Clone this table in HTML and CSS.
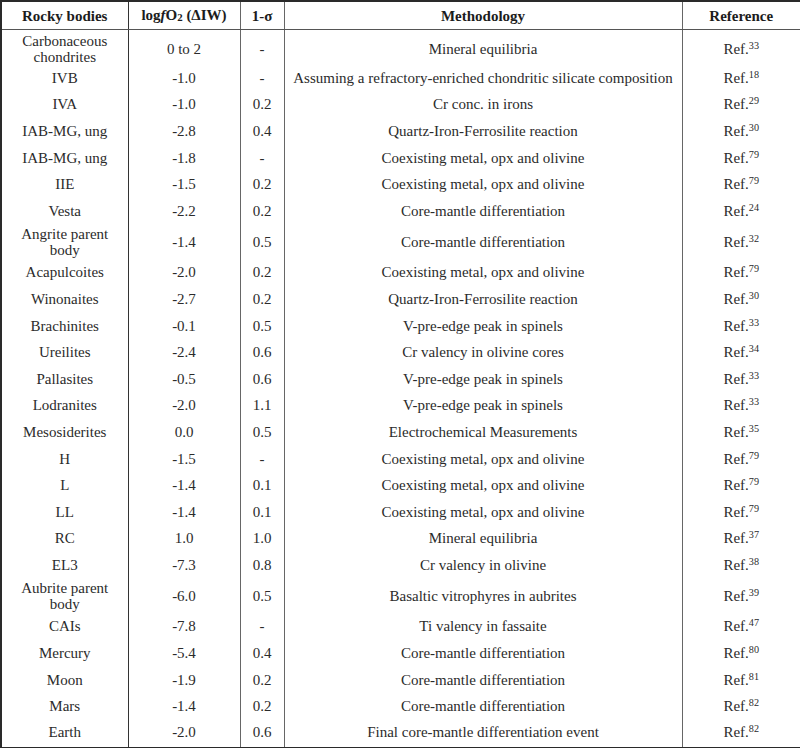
FILE: index.html
```html
<!DOCTYPE html>
<html>
<head>
<meta charset="utf-8">
<link rel="stylesheet" href="styles.css">
</head>
<body>
<table class="data">
<colgroup>
<col class="c1"><col class="c2"><col class="c3"><col class="c4"><col class="c5">
</colgroup>
<thead>
<tr class="head"><th class="first">Rocky bodies</th><th>log<i>f</i>O<sub class="low">2</sub> (ΔIW)</th><th>1-σ</th><th>Methodology</th><th>Reference</th></tr>
</thead>
<tbody>
<tr class="two top"><td class="first">Carbonaceous<br>chondrites</td><td>0 to 2</td><td>-</td><td>Mineral equilibria</td><td>Ref.<sup>33</sup></td></tr>
<tr><td class="first">IVB</td><td>-1.0</td><td>-</td><td>Assuming a refractory-enriched chondritic silicate composition</td><td>Ref.<sup>18</sup></td></tr>
<tr><td class="first">IVA</td><td>-1.0</td><td>0.2</td><td>Cr conc. in irons</td><td>Ref.<sup>29</sup></td></tr>
<tr><td class="first">IAB-MG, ung</td><td>-2.8</td><td>0.4</td><td>Quartz-Iron-Ferrosilite reaction</td><td>Ref.<sup>30</sup></td></tr>
<tr><td class="first">IAB-MG, ung</td><td>-1.8</td><td>-</td><td>Coexisting metal, opx and olivine</td><td>Ref.<sup>79</sup></td></tr>
<tr><td class="first">IIE</td><td>-1.5</td><td>0.2</td><td>Coexisting metal, opx and olivine</td><td>Ref.<sup>79</sup></td></tr>
<tr><td class="first">Vesta</td><td>-2.2</td><td>0.2</td><td>Core-mantle differentiation</td><td>Ref.<sup>24</sup></td></tr>
<tr class="two"><td class="first">Angrite parent<br>body</td><td>-1.4</td><td>0.5</td><td>Core-mantle differentiation</td><td>Ref.<sup>32</sup></td></tr>
<tr><td class="first">Acapulcoites</td><td>-2.0</td><td>0.2</td><td>Coexisting metal, opx and olivine</td><td>Ref.<sup>79</sup></td></tr>
<tr><td class="first">Winonaites</td><td>-2.7</td><td>0.2</td><td>Quartz-Iron-Ferrosilite reaction</td><td>Ref.<sup>30</sup></td></tr>
<tr><td class="first">Brachinites</td><td>-0.1</td><td>0.5</td><td>V-pre-edge peak in spinels</td><td>Ref.<sup>33</sup></td></tr>
<tr><td class="first">Ureilites</td><td>-2.4</td><td>0.6</td><td>Cr valency in olivine cores</td><td>Ref.<sup>34</sup></td></tr>
<tr><td class="first">Pallasites</td><td>-0.5</td><td>0.6</td><td>V-pre-edge peak in spinels</td><td>Ref.<sup>33</sup></td></tr>
<tr><td class="first">Lodranites</td><td>-2.0</td><td>1.1</td><td>V-pre-edge peak in spinels</td><td>Ref.<sup>33</sup></td></tr>
<tr><td class="first">Mesosiderites</td><td>0.0</td><td>0.5</td><td>Electrochemical Measurements</td><td>Ref.<sup>35</sup></td></tr>
<tr><td class="first">H</td><td>-1.5</td><td>-</td><td>Coexisting metal, opx and olivine</td><td>Ref.<sup>79</sup></td></tr>
<tr><td class="first">L</td><td>-1.4</td><td>0.1</td><td>Coexisting metal, opx and olivine</td><td>Ref.<sup>79</sup></td></tr>
<tr><td class="first">LL</td><td>-1.4</td><td>0.1</td><td>Coexisting metal, opx and olivine</td><td>Ref.<sup>79</sup></td></tr>
<tr><td class="first">RC</td><td>1.0</td><td>1.0</td><td>Mineral equilibria</td><td>Ref.<sup>37</sup></td></tr>
<tr><td class="first">EL3</td><td>-7.3</td><td>0.8</td><td>Cr valency in olivine</td><td>Ref.<sup>38</sup></td></tr>
<tr class="two"><td class="first">Aubrite parent<br>body</td><td>-6.0</td><td>0.5</td><td>Basaltic vitrophyres in aubrites</td><td>Ref.<sup>39</sup></td></tr>
<tr><td class="first">CAIs</td><td>-7.8</td><td>-</td><td>Ti valency in fassaite</td><td>Ref.<sup>47</sup></td></tr>
<tr><td class="first">Mercury</td><td>-5.4</td><td>0.4</td><td>Core-mantle differentiation</td><td>Ref.<sup>80</sup></td></tr>
<tr><td class="first">Moon</td><td>-1.9</td><td>0.2</td><td>Core-mantle differentiation</td><td>Ref.<sup>81</sup></td></tr>
<tr><td class="first">Mars</td><td>-1.4</td><td>0.2</td><td>Core-mantle differentiation</td><td>Ref.<sup>82</sup></td></tr>
<tr><td class="first">Earth</td><td>-2.0</td><td>0.6</td><td>Final core-mantle differentiation event</td><td>Ref.<sup>82</sup></td></tr>
</tbody>
</table>
</body>
</html>
```
FILE: styles.css
```css
html, body {
  margin: 0;
  padding: 0;
  background: #fff;
}
.data {
  width: 800px;
  border-collapse: collapse;
  table-layout: fixed;
  font-family: "Liberation Serif", "Times New Roman", serif;
  font-size: 15px;
  color: #2b2b2b;
  border: 2px solid #2a2a2a;
}
.c1 { width: 127px; }
.c2 { width: 112px; }
.c3 { width: 44px; }
.c4 { width: 398px; }
.c5 { width: 119px; }
.data th, .data td {
  text-align: center;
  vertical-align: middle;
  line-height: 16px;
  border-left: 1px solid #666;
  border-right: 1px solid #666;
  white-space: nowrap;
}
.data td {
  padding: 0 2px 3px;
}
.data th {
  padding: 1px 2px 0;
  font-weight: bold;
  border-bottom: 1px solid #555;
  color: #1c1c1c;
}
.data .first {
  border-right: 1px solid #333;
}
.data thead tr {
  height: 28px;
}
.data tbody tr {
  height: 26.6px;
}
.data tbody tr.two {
  height: 34.6px;
}
.data tbody tr.top {
  height: 37px;
}
.data tbody tr.top td {
  padding: 3px 2px 0;
}
.low {
  font-size: 0.72em;
  vertical-align: baseline;
  position: relative;
  top: 0.1em;
}
.data sup {
  font-size: 0.68em;
  line-height: 0;
  vertical-align: 0.5em;
}
```
